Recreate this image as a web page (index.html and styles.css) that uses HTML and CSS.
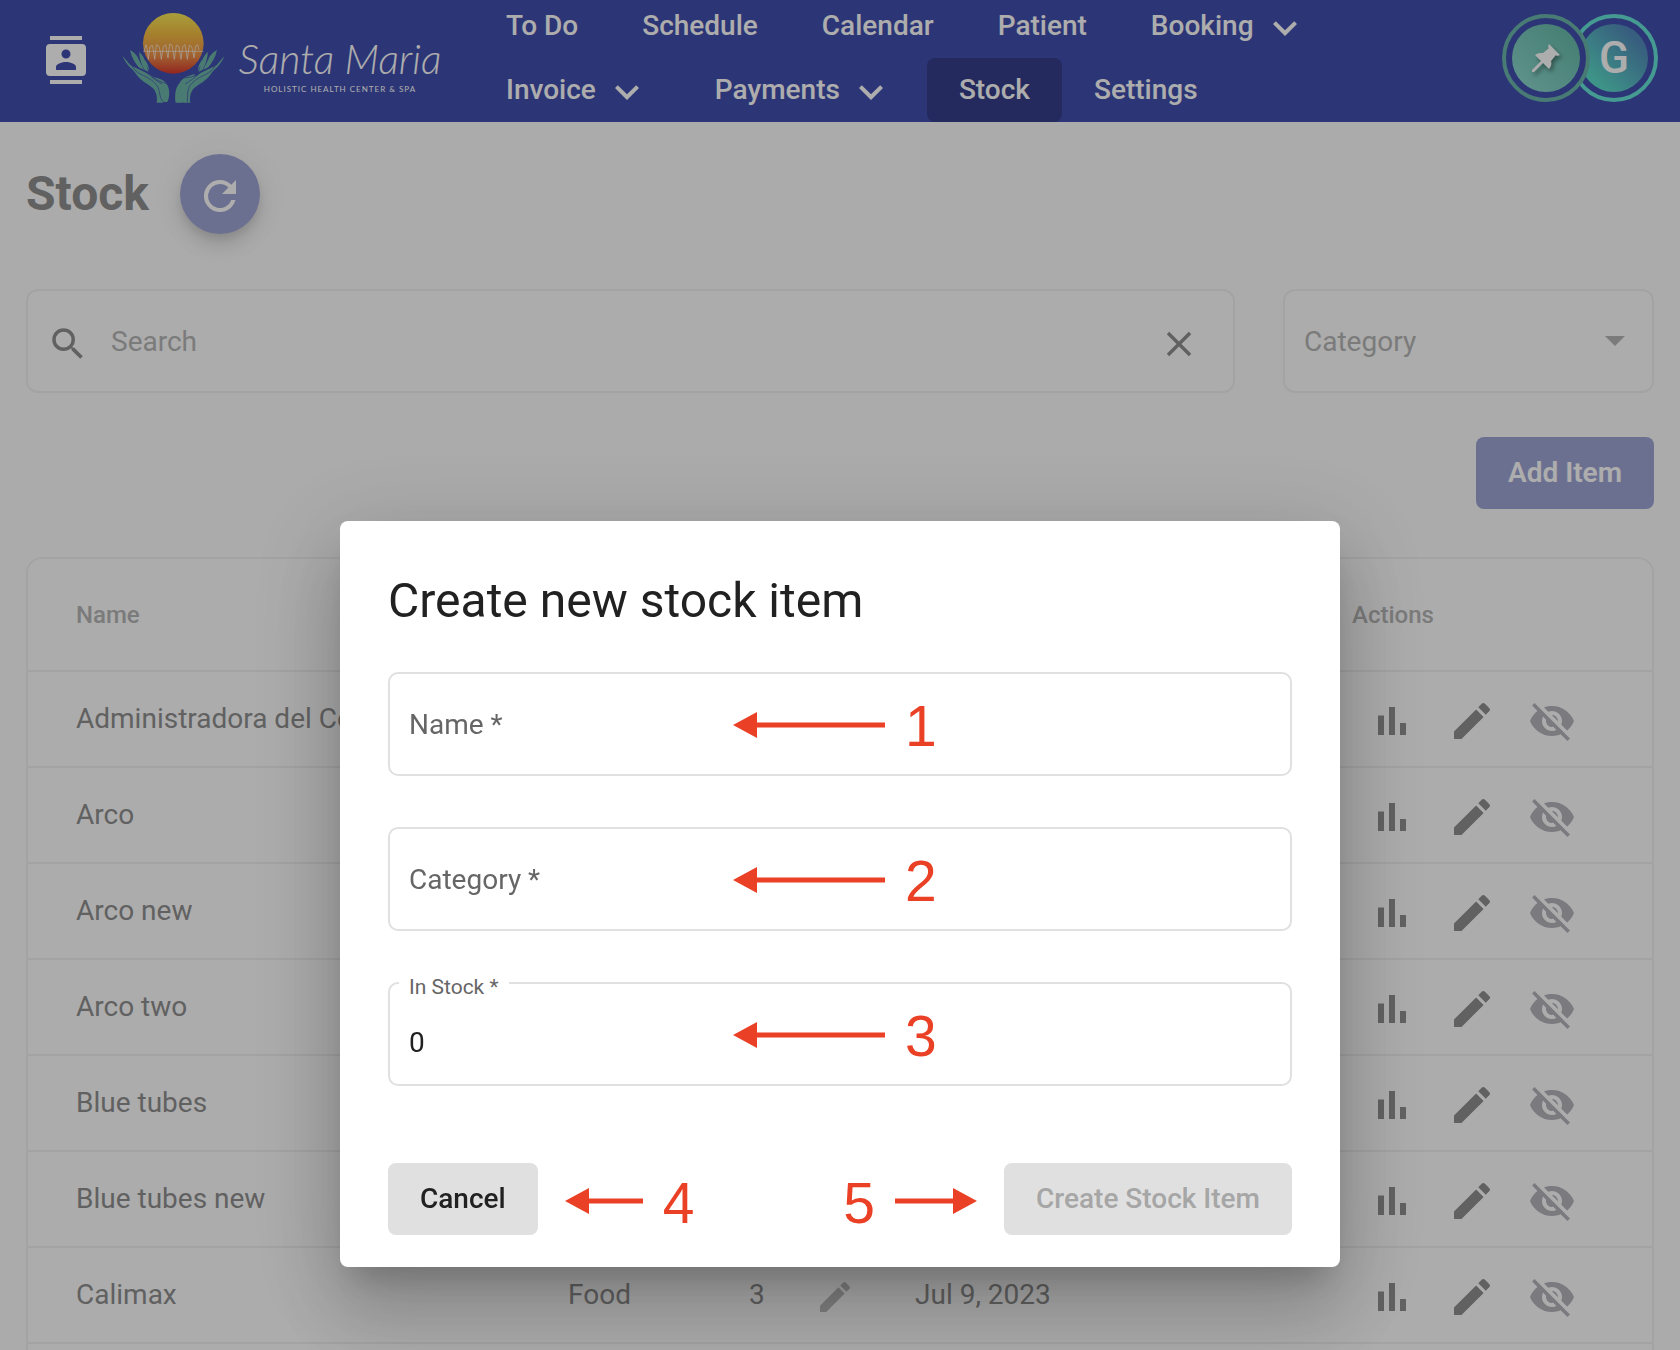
FILE: index.html
```html
<!DOCTYPE html>
<html lang="en">
<head>
<meta charset="utf-8">
<title>Stock</title>
<link rel="stylesheet" href="styles.css">
</head>
<body>
<svg class="sprite" aria-hidden="true">
  <symbol id="chevron" viewBox="0 0 24 24"><path d="M7.41 8.59 12 13.17l4.59-4.58L18 10l-6 6-6-6z"/></symbol>
  <symbol id="bars" viewBox="0 0 24 24"><path d="M5 9.2h3V19H5zM10.5 5h3v14h-3zM16 13h3v6h-3z"/></symbol>
  <symbol id="pencil" viewBox="0 0 24 24"><path d="M3 17.25V21h3.75L17.81 9.94l-3.75-3.75zM20.71 7.04a1 1 0 0 0 0-1.41l-2.34-2.34a1 1 0 0 0-1.41 0l-1.83 1.83 3.75 3.75z"/></symbol>
  <symbol id="eye-off" viewBox="0 0 24 24"><path d="M12 7c2.76 0 5 2.24 5 5 0 .65-.13 1.26-.36 1.83l2.92 2.92c1.51-1.26 2.7-2.89 3.43-4.75-1.73-4.39-6-7.5-11-7.5-1.4 0-2.74.25-3.98.7l2.16 2.16C10.74 7.13 11.35 7 12 7zM2 4.27l2.28 2.28.46.46C3.08 8.3 1.78 10.02 1 12c1.73 4.39 6 7.5 11 7.5 1.55 0 3.03-.3 4.38-.84l.42.42L19.73 22 21 20.73 3.27 3zM7.53 9.8l1.55 1.55c-.05.21-.08.43-.08.65 0 1.66 1.34 3 3 3 .22 0 .44-.03.65-.08l1.55 1.55c-.67.33-1.41.53-2.2.53-2.76 0-5-2.24-5-5 0-.79.2-1.53.53-2.2zm4.31-.78 3.15 3.15.02-.16c0-1.66-1.34-3-3-3z"/></symbol>
  <symbol id="arrow-long" viewBox="0 0 152 26"><path d="M0 13 24 0v10.500h128v5H24V26z"/></symbol>
  <symbol id="arrow-left" viewBox="0 0 78 26"><path d="M0 13 24 0v10.500h54v5H24V26z"/></symbol>
  <symbol id="arrow-right" viewBox="0 0 82 26"><path d="M82 13 58 0v10.500H0v5h58V26z"/></symbol>
</svg>

<header class="topbar">
  <button class="icon-button" aria-label="Contacts">
    <svg class="icon" viewBox="0 0 24 24"><path d="M20 0H4v2h16zM4 24h16v-2H4zM20 4H4a2 2 0 0 0-2 2v12a2 2 0 0 0 2 2h16a2 2 0 0 0 2-2V6a2 2 0 0 0-2-2zm-8 2.750a2.250 2.250 0 1 1 0 4.500 2.250 2.250 0 0 1 0-4.500zM17 17H7v-1.500c0-1.670 3.330-2.500 5-2.500s5 .830 5 2.500z"/></svg>
  </button>
  <a class="brand" href="#">
    <svg class="brand-mark" viewBox="0 0 360 312" aria-hidden="true">
      <defs><linearGradient id="sun" x1="0" y1="0" x2="0" y2="1"><stop offset="0" stop-color="#f9ea58"/><stop offset=".35" stop-color="#f4bd43"/><stop offset=".7" stop-color="#ee9148"/><stop offset="1" stop-color="#d8382f"/></linearGradient></defs>
      <circle cx="172" cy="112" r="91" fill="url(#sun)"/>
      <path class="pulse" d="M82 136H262"/>
      <path class="pulse" d="M84 136l6-20 4 16 3 28 5-38 7-4 3 14 4 28 5-44 7 4 4 12 4 28 6-38 7-6 3 18 4 22 5-42 7 4 3 16 4 26 6-42 7 2 3 14 4 26 5-38 7-6 3 16 4 28 6-42 7 4 3 12 4 22 5-36 6-4 4 16"/>
      <g class="hands">
        <path d="M122 290c3-16-1-33-11-43-14-12-36-22-48-39-8-12-13-18-19-22-10-9-19-22-24-36l22 26c4 4 8 3 12 7l33 16c24 12 38 24 48 38 14 16 12 42 6 53zM70 186c-14-15-24-34-28-54 14 8 23 18 27 30l15 30zM86 192c-10-15-15-34-17-54 11 9 16 19 19 29l9 30zM99 196l-16-38c10 9 16 22 16 38zM108 213c16 2 38 8 46 24 8 14 7 39 0 51h-12c4-14 0-31-7-43-8-11-22-22-27-32z"/>
        <path class="hand-line" d="M48 180c7 12 16 20 27 25 24 11 42 22 51 39 6 13 4 33 17 45M48 180c20 2 37 13 52 27 12 11 25 19 38 27M110 214c14 8 28 17 46 19"/>
      </g>
      <g class="hands" transform="matrix(-1 0 0 1 345 0)">
        <path d="M122 290c3-16-1-33-11-43-14-12-36-22-48-39-8-12-13-18-19-22-10-9-19-22-24-36l22 26c4 4 8 3 12 7l33 16c24 12 38 24 48 38 14 16 12 42 6 53zM70 186c-14-15-24-34-28-54 14 8 23 18 27 30l15 30zM86 192c-10-15-15-34-17-54 11 9 16 19 19 29l9 30zM99 196l-16-38c10 9 16 22 16 38zM108 205c16 2 38 10 46 26 15 14 15 45 12 59h-24c4-14 0-31-7-43-8-11-22-22-27-42z"/>
        <path class="hand-line" d="M48 180c7 12 16 20 27 25 24 11 42 22 51 39 6 13 4 33 5 45M48 180c20 2 37 13 52 27 12 11 25 19 38 27M96 204c14 8 28 10 46 12"/>
      </g>
    </svg>
    <span class="brand-text">
      <span class="brand-name">Santa Maria</span>
      <span class="brand-tag">HOLISTIC HEALTH CENTER &amp; SPA</span>
    </span>
  </a>
  <nav class="nav">
    <a class="nav-item" href="#">To Do</a>
    <a class="nav-item" href="#">Schedule</a>
    <a class="nav-item" href="#">Calendar</a>
    <a class="nav-item" href="#">Patient</a>
    <a class="nav-item" href="#">Booking <svg class="icon"><use href="#chevron"/></svg></a>
    <a class="nav-item" href="#">Invoice <svg class="icon"><use href="#chevron"/></svg></a>
    <a class="nav-item" href="#">Payments <svg class="icon"><use href="#chevron"/></svg></a>
    <a class="nav-item nav-item-active" href="#">Stock</a>
    <a class="nav-item" href="#">Settings</a>
  </nav>
  <div class="avatars">
    <button class="avatar avatar-pin" aria-label="Pinned"><span class="avatar-disc"><svg class="pin" viewBox="0 0 28 28"><path d="M17 0 28 11l-3 1-1-1-5 6c1 3 0 6-2 8l-6-6-9 9-2 0 0-2 9-9-6-6c3-2 5-2 8-2l6-5-1-1z"/></svg></span></button>
    <button class="avatar avatar-user"><span class="avatar-disc">G</span></button>
  </div>
</header>

<main class="page">
  <div class="heading">
    <h1 class="title">Stock</h1>
    <button class="fab" aria-label="Refresh"><svg class="icon" viewBox="0 0 24 24"><path d="M17.650 6.350A7.958 7.958 0 0 0 12 4a8 8 0 1 0 7.730 10h-2.080A6 6 0 1 1 12 6c1.660 0 3.140.690 4.220 1.780L13 11h7V4z"/></svg></button>
  </div>
  <div class="filters">
    <div class="filter">
      <svg class="filter-icon" viewBox="0 0 24 24"><path d="M15.500 14h-.790l-.280-.270A6.471 6.471 0 0 0 16 9.500 6.500 6.500 0 1 0 9.500 16c1.610 0 3.090-.590 4.230-1.570l.270.280v.790l5 4.990L20.490 19zm-6 0a4.500 4.500 0 1 1 0-9 4.500 4.500 0 0 1 0 9z"/></svg>
      <input class="search" type="text" placeholder="Search" aria-label="Search">
      <button class="clear" aria-label="Clear"><svg class="filter-icon" viewBox="0 0 24 24"><path d="M19 6.410 17.590 5 12 10.590 6.410 5 5 6.410 10.590 12 5 17.590 6.410 19 12 13.410 17.590 19 19 17.590 13.410 12z"/></svg></button>
    </div>
    <div class="filter filter-category">
      <select class="category" aria-label="Category"><option>Category</option></select>
      <svg class="caret" viewBox="0 0 20 10"><path d="M0 0h20L10 10z"/></svg>
    </div>
  </div>
  <div class="toolbar"><button class="button button-primary">Add Item</button></div>
  <div class="card">
    <table class="table">
      <colgroup><col class="col-name"><col class="col-category"><col class="col-count"><col><col class="col-actions"></colgroup>
      <thead><tr><th>Name</th><th></th><th></th><th></th><th>Actions</th></tr></thead>
      <tbody>
        <tr><td>Administradora del Ce</td><td></td><td></td><td></td><td><div class="actions"><svg class="icon"><use href="#bars"/></svg><svg class="icon"><use href="#pencil"/></svg><svg class="icon icon-hide"><use href="#eye-off"/></svg></div></td></tr>
        <tr><td>Arco</td><td></td><td></td><td></td><td><div class="actions"><svg class="icon"><use href="#bars"/></svg><svg class="icon"><use href="#pencil"/></svg><svg class="icon icon-hide"><use href="#eye-off"/></svg></div></td></tr>
        <tr><td>Arco new</td><td></td><td></td><td></td><td><div class="actions"><svg class="icon"><use href="#bars"/></svg><svg class="icon"><use href="#pencil"/></svg><svg class="icon icon-hide"><use href="#eye-off"/></svg></div></td></tr>
        <tr><td>Arco two</td><td></td><td></td><td></td><td><div class="actions"><svg class="icon"><use href="#bars"/></svg><svg class="icon"><use href="#pencil"/></svg><svg class="icon icon-hide"><use href="#eye-off"/></svg></div></td></tr>
        <tr><td>Blue tubes</td><td></td><td></td><td></td><td><div class="actions"><svg class="icon"><use href="#bars"/></svg><svg class="icon"><use href="#pencil"/></svg><svg class="icon icon-hide"><use href="#eye-off"/></svg></div></td></tr>
        <tr><td>Blue tubes new</td><td></td><td></td><td></td><td><div class="actions"><svg class="icon"><use href="#bars"/></svg><svg class="icon"><use href="#pencil"/></svg><svg class="icon icon-hide"><use href="#eye-off"/></svg></div></td></tr>
        <tr><td>Calimax</td><td>Food</td><td><div class="count">3 <svg class="icon-small"><use href="#pencil"/></svg></div></td><td>Jul 9, 2023</td><td><div class="actions"><svg class="icon"><use href="#bars"/></svg><svg class="icon"><use href="#pencil"/></svg><svg class="icon icon-hide"><use href="#eye-off"/></svg></div></td></tr>
        <tr><td></td><td></td><td></td><td></td><td></td></tr>
      </tbody>
    </table>
  </div>
</main>

<div class="backdrop">
  <form class="dialog" role="dialog" aria-labelledby="dialog-title">
    <h2 class="dialog-title" id="dialog-title">Create new stock item</h2>
    <div class="fields">
      <div class="field">
        <label class="label" for="name">Name *</label>
        <input class="input" id="name" type="text">
        <div class="note note-over"><svg class="arrow-long"><use href="#arrow-long"/></svg><span class="digit">1</span></div>
      </div>
      <div class="field">
        <label class="label" for="category">Category *</label>
        <input class="input" id="category" type="text">
        <div class="note note-over"><svg class="arrow-long"><use href="#arrow-long"/></svg><span class="digit">2</span></div>
      </div>
      <div class="field field-filled">
        <label class="label label-float" for="stock">In Stock *</label>
        <input class="input" id="stock" type="text" value="0">
        <div class="note note-over"><svg class="arrow-long"><use href="#arrow-long"/></svg><span class="digit">3</span></div>
      </div>
    </div>
    <div class="dialog-actions">
      <button class="button" type="button">Cancel</button>
      <div class="note note-cancel"><svg class="arrow-left"><use href="#arrow-left"/></svg><span class="digit">4</span></div>
      <div class="note note-create"><span class="digit">5</span><svg class="arrow-right"><use href="#arrow-right"/></svg></div>
      <button class="button" type="submit" disabled>Create Stock Item</button>
    </div>
  </form>
</div>
</body>
</html>
```
FILE: styles.css
```css
* { box-sizing: border-box; }

body {
  margin: 0;
  height: 100vh;
  overflow: hidden;
  background: #fcfcfc;
  color: #8f8f8f;
  font: 400 28px/32px Roboto, "Liberation Sans", sans-serif;
}

button, input, select { font: inherit; color: inherit; margin: 0; }
button { border: 0; padding: 0; background: none; }
input, select { border: 0; outline: 0; background: none; }
svg { display: block; flex: none; fill: currentColor; }
a { color: inherit; text-decoration: none; }

.sprite { position: absolute; width: 0; height: 0; }
.icon { width: 48px; height: 48px; }
.icon-small { width: 40px; height: 40px; color: #bdbdbd; }

/* Top bar */
.topbar {
  display: flex;
  align-items: center;
  height: 122px;
  padding: 0 22px 2px 42px;
  overflow: hidden;
  background: #424fae;
  color: #fff;
}
.brand { display: flex; align-items: center; margin-left: 26px; width: 358px; padding-bottom: 4px; }
.brand-mark { width: 120px; height: 104px; }
.brand-text { display: flex; flex-direction: column; align-items: center; margin-left: 2px; width: 204px; padding-top: 14px; }
.brand-name { font: italic 300 41px/48px Lato, sans-serif; white-space: nowrap; }
.brand-tag { font: 400 8px/12px Lato, sans-serif; letter-spacing: 1px; white-space: nowrap; }
.pulse { fill: none; stroke: #fff; stroke-width: 3; stroke-opacity: .6; }
.hands { fill: #6db5aa; }
.hand-line { fill: none; stroke: #424fae; stroke-width: 2; }

.nav { display: flex; flex-wrap: wrap; flex: 1; align-self: flex-end; margin-bottom: -2px; font-weight: 500; }
.nav-item { display: flex; align-items: center; gap: 7px; height: 64px; padding: 0 32px; border-radius: 8px; }
.nav-item .icon { margin-top: 4px; }
.nav-item-active { background: #353d8b; }

.avatars { display: flex; padding-bottom: 4px; }
.avatar { width: 88px; height: 88px; padding: 6px; border: 4px solid; border-radius: 50%; }
.avatar-disc { display: flex; align-items: center; justify-content: center; height: 68px; border-radius: 50%; color: #fff; font-size: 44px; font-weight: 500; }
.avatar-pin { position: relative; z-index: 1; border-color: #69b5aa; background: #424fae; }
.avatar-pin .avatar-disc { background: linear-gradient(45deg, #8fdad2, #62b7a6); }
.avatar-user { margin-left: -20px; border-color: #66e3d6; }
.avatar-user .avatar-disc { background: linear-gradient(45deg, #5cd9c9 20%, #528bba 80%); }
.pin { width: 28px; height: 28px; filter: drop-shadow(2px 3px 2px rgba(0, 0, 0, .4)); }

/* Page */
.page { padding: 32px 26px; }
.heading { display: flex; align-items: center; gap: 31px; }
.title { margin: 0; font-size: 48px; line-height: 56px; font-weight: 700; }
.fab {
  display: flex;
  align-items: center;
  justify-content: center;
  width: 80px;
  height: 80px;
  padding-top: 4px;
  border-radius: 50%;
  background: #a0a6d5;
  color: #fff;
  box-shadow: 0 6px 10px -2px rgba(0, 0, 0, .1), 0 12px 20px rgba(0, 0, 0, .1), 0 2px 36px rgba(0, 0, 0, .06);
}

.filters { display: grid; grid-template-columns: minmax(0, 1fr) 371px; gap: 48px; margin-top: 55px; }
.filter {
  display: flex;
  align-items: center;
  height: 104px;
  padding: 0 33px 0 19px;
  border: 2px solid #f0f0f0;
  border-radius: 12px;
  background: #fefefe;
  color: #b5b5b5;
}
.filter-icon { width: 42px; height: 42px; margin-top: 6px; color: #909090; }
.search { flex: 1; min-width: 0; padding: 1px 22px 0; }
.search::placeholder { color: #b5b5b5; opacity: 1; }
.filter-category { padding: 0 27px 0 19px; }
.category { flex: 1; padding: 1px 0 0; appearance: none; }
.caret { width: 20px; height: 10px; }

.toolbar { display: flex; justify-content: flex-end; margin: 44px 0 48px; }
.button { height: 72px; padding: 0 32px; border-radius: 8px; background: #e0e0e0; font-weight: 500; white-space: nowrap; }
.button:disabled { color: #a6a6a6; }
.button-primary { background: #a0a6d5; color: #fff; font-weight: 600; }

.card { border: 2px solid #f0f0f0; border-radius: 16px; background: #fefefe; }
.table { width: 100%; table-layout: fixed; border-collapse: separate; border-spacing: 0; }
.table th, .table td { padding: 0; border-bottom: 2px solid #f0f0f0; text-align: left; white-space: nowrap; }
.table th { height: 113px; font-size: 24px; font-weight: 500; color: #b5b5b5; }
.table td { height: 96px; }
.table th:first-child, .table td:first-child { padding-left: 48px; }
.col-name { width: 540px; }
.col-category { width: 181px; }
.col-count { width: 166px; }
.col-actions { width: 300px; }
.actions { display: flex; gap: 32px; padding: 4px 0 0 16px; color: #909090; }
.icon-hide { color: #b5b6bc; }
.count { display: flex; align-items: center; gap: 50px; }
.count .icon-small { margin-top: 4px; }

/* Dialog */
.backdrop {
  position: fixed;
  inset: 0;
  z-index: 10;
  display: flex;
  justify-content: center;
  align-items: flex-start;
  padding-top: 521px;
  background: rgba(0, 0, 0, .32);
}
.dialog {
  width: 1000px;
  max-width: 100%;
  padding: 48px 48px 32px;
  border-radius: 8px;
  background: #fff;
  color: #212121;
  box-shadow: 0 22px 30px -14px rgba(0, 0, 0, .2), 0 48px 76px 6px rgba(0, 0, 0, .14), 0 18px 92px 16px rgba(0, 0, 0, .12);
}
.dialog-title { margin: 0 0 39px; font-size: 48px; line-height: 64px; font-weight: 400; }
.fields { display: grid; gap: 51px; }
.field { position: relative; display: flex; align-items: center; height: 104px; padding: 1px 19px 0; border: 2px solid #e0e0e0; border-radius: 10px; }
.label { color: #666; white-space: nowrap; }
.input { flex: 1; min-width: 0; padding: 0; }
.field-filled .input { padding-top: 16px; }
.label-float { position: absolute; left: 9px; top: -11px; padding: 0 10px; background: #fff; font-size: 21px; line-height: 28px; }
.dialog-actions { display: flex; align-items: center; margin-top: 77px; }

/* Numbered callouts */
.note { display: flex; align-items: center; gap: 20px; color: #ea4025; }
.note-over { position: absolute; left: 343px; top: 17px; }
.note-cancel { margin-left: 27px; padding-top: 4px; }
.note-create { margin: 0 27px 0 auto; padding-top: 4px; }
.digit { padding-top: 3px; font: 400 57px/64px "Liberation Sans", sans-serif; }
.arrow-long { width: 152px; height: 26px; }
.arrow-left { width: 78px; height: 26px; }
.arrow-right { width: 82px; height: 26px; }
```
